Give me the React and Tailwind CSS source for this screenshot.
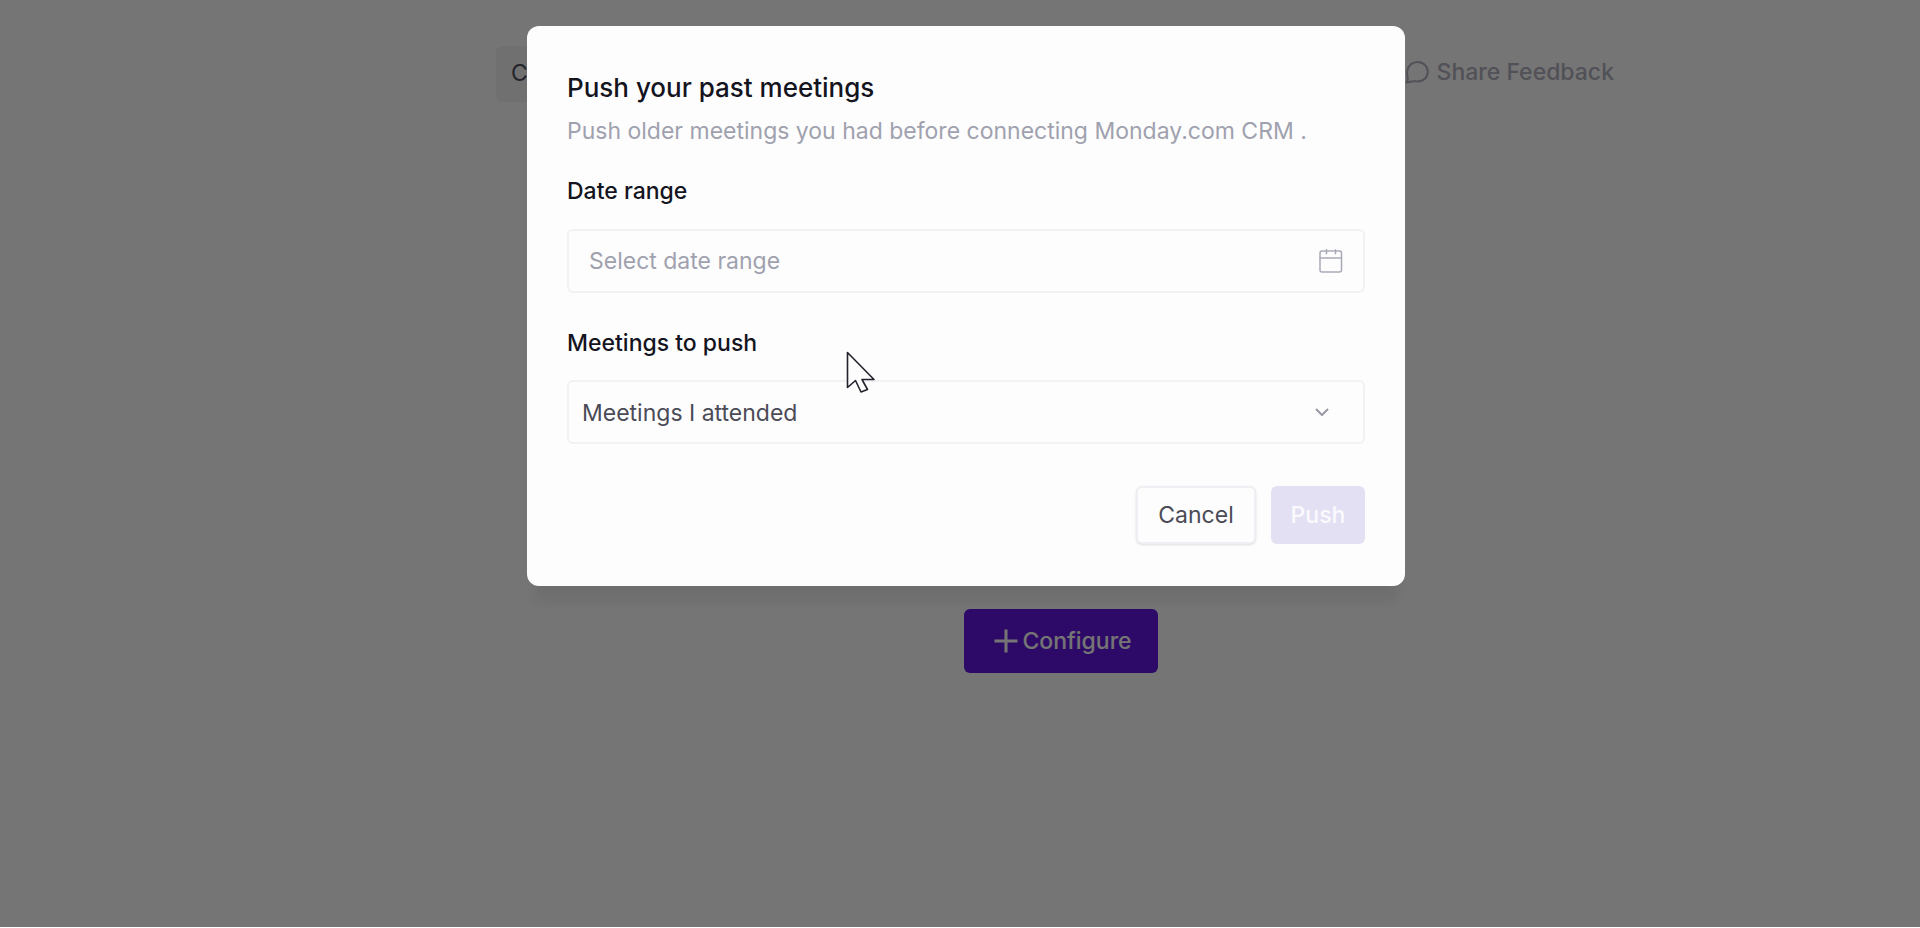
import { useState } from "react";

const ChatIcon = () => (
  <svg className="w-6 h-6 shrink-0" viewBox="0 0 24 24" fill="none" stroke="currentColor" strokeWidth="2" strokeLinejoin="round">
    <path d="M1.5 22.5 C3.2 20.4 2.9 18.3 2.4 16.4 C1.9 14.7 2 13 2.3 10.8 C3.1 5.4 7.4 2 12.5 2 C18.3 2 22.8 6.3 22.8 11.8 C22.8 17.4 18.5 21.4 12.6 21.4 C10.6 21.4 9.2 21 7.9 21.2 C6 21.4 4.1 22.3 1.5 22.5 Z" />
  </svg>
);

const CalendarIcon = () => (
  <svg className="w-6 h-6 shrink-0" viewBox="0 0 24 24" fill="none" stroke="currentColor" strokeWidth="1.5" strokeLinecap="round">
    <rect x="1" y="2" width="21.5" height="21" rx="2" />
    <path d="M1 9h21.500M7.500 .8v4M16.500 .8v4" />
  </svg>
);

const CursorIcon = () => (
  <svg className="absolute left-[319px] top-[325px] w-8 h-11 pointer-events-none" viewBox="0 0 32 44" fill="#fdfdfd" stroke="#23232d" strokeWidth="1.6" strokeLinejoin="round">
    <path d="M1.5 1.5 V36.5 L9.5 29.5 L15 41 L21.5 38.5 L16 28.5 H28 Z" />
  </svg>
);

function PageContent() {
  return (
    <div className="ml-[202px] flex flex-col items-center">
      <div className="flex h-[102px] w-full max-w-[1130px] items-start justify-between pt-[46px]">
        <button className="h-14 w-40 rounded-md bg-[#f4f4f4] px-[15px] pb-0.5 text-left text-[23px] text-[#50505f]">
          C
        </button>
        <a href="#feedback" className="mr-3 mt-1.5 flex items-center gap-2 text-[23px] leading-10 font-medium text-[#b0b0be]">
          <ChatIcon />
          Share Feedback
        </a>
      </div>
      <button className="mt-[507px] flex h-16 w-[194px] items-center justify-center gap-1 rounded-md bg-[#6416e2] pl-1 text-[23px] font-medium text-white">
        <svg className="w-6 h-6" viewBox="0 0 24 24" stroke="currentColor" strokeWidth="3">
          <path d="M12 .5v23M.5 12h23" />
        </svg>
        Configure
      </button>
    </div>
  );
}

function PushMeetingsModal() {
  const [range, setRange] = useState("");
  const [scope, setScope] = useState("attended");

  return (
    <div
      role="dialog"
      aria-labelledby="push-title"
      className="relative w-full max-w-[878px] rounded-xl bg-[#fdfdfd] px-10 pt-10 pb-[42px] shadow-[0_24px_12px_-8px_rgba(0,0,0,0.06)]"
    >
      <h2 id="push-title" className="text-[26px] leading-11 font-medium text-[#14141f]">
        Push your past meetings
      </h2>
      <p className="text-[23px] leading-[42px] text-[#a0a1ae]">
        Push older meetings you had before connecting Monday.com CRM .
      </p>

      <label htmlFor="range" className="mt-[25px] mb-6 block text-[23px] leading-7 font-medium text-[#14141f]">
        Date range
      </label>
      <div className="flex h-16 items-center rounded-md border-2 border-[#f2f2f4] px-5 text-[#a9aab6]">
        <input
          id="range"
          type="text"
          value={range}
          onChange={(e) => setRange(e.target.value)}
          placeholder="Select date range"
          className="min-w-0 flex-1 bg-transparent text-[23px] outline-none placeholder:text-[#a0a1ae]"
        />
        <CalendarIcon />
      </div>

      <label htmlFor="scope" className="mt-9 mb-[23px] block text-[23px] leading-7 font-medium text-[#14141f]">
        Meetings to push
      </label>
      <div className="relative">
        <select
          id="scope"
          value={scope}
          onChange={(e) => setScope(e.target.value)}
          className="h-16 w-full appearance-none rounded-md border-2 border-[#f2f2f4] bg-transparent px-[13px] pt-0.5 text-[23px] text-[#4b4b57] outline-none"
        >
          <option value="attended">Meetings I attended</option>
        </select>
        <svg className="absolute right-9 top-7 h-2 w-3.5 pointer-events-none" viewBox="0 0 14 8" fill="none" stroke="#9899a5" strokeWidth="2">
          <path d="M1 1l6 6 6-6" />
        </svg>
      </div>

      <div className="mt-[42px] flex justify-end gap-[15px]">
        <button className="h-[58px] w-[120px] rounded-md border-2 border-[#efeff3] bg-[#fdfdfd] text-[23px] text-[#4b4b57] shadow-sm">
          Cancel
        </button>
        <button className="h-[58px] w-[94px] rounded-md bg-[#e4e0f4] text-[23px] font-medium text-[#fafafd]">
          Push
        </button>
      </div>
      <CursorIcon />
    </div>
  );
}

export default function App() {
  return (
    <div className="relative min-h-[calc(100vh-1px)] bg-white font-['Inter',sans-serif]">
      <PageContent />
      <div className="absolute inset-0 flex items-start justify-center bg-black/54 pl-3 pt-[26px]">
        <PushMeetingsModal />
      </div>
    </div>
  );
}
